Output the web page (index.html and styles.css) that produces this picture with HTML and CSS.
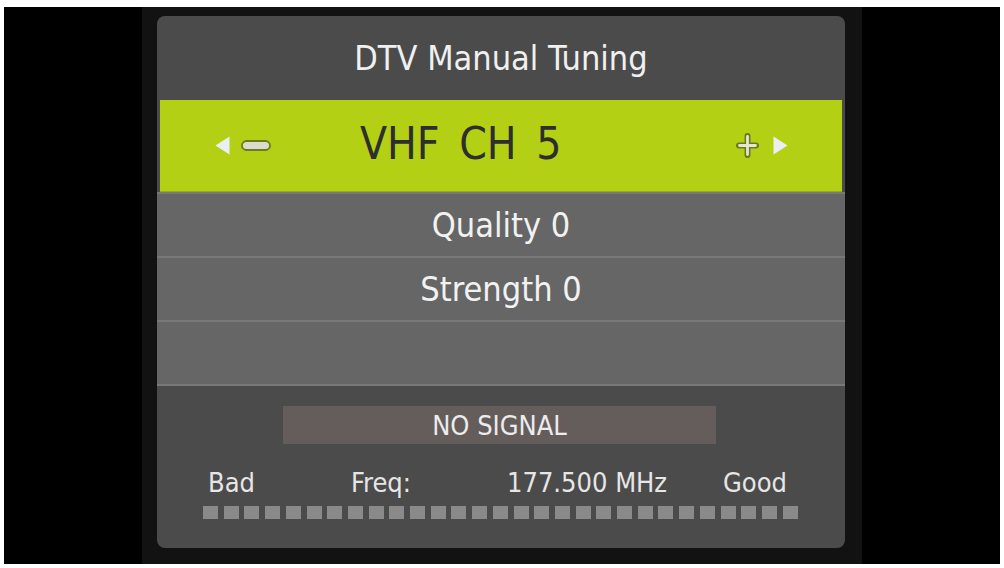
FILE: index.html
```html
<!DOCTYPE html>
<html>
<head>
<meta charset="utf-8">
<link rel="stylesheet" href="styles.css">
</head>
<body>
<div class="screen">
  <div class="frame">
    <div class="panel">
      <div class="title">DTV Manual Tuning</div>
      <div class="tune">
        <div class="ctrl ctrl-left">
          <svg width="15" height="19" viewBox="0 0 15 19"><polygon points="14.5,0.5 14.5,18.5 0.5,9.5" fill="#eceef6"/></svg>
          <svg width="30" height="11" viewBox="0 0 30 11"><rect x="1" y="1" width="28" height="9" rx="4.5" fill="#dcdccc" stroke="#6c7a1e" stroke-width="1.8"/></svg>
        </div>
        <div class="channel">VHF CH 5</div>
        <div class="ctrl ctrl-right">
          <svg width="23" height="25" viewBox="0 0 23 25"><path d="M11.5 3 V22 M3 12.5 H20" stroke="#6c7a1e" stroke-width="6" stroke-linecap="round" fill="none"/><path d="M11.5 3.5 V21.5 M3.5 12.5 H19.5" stroke="#e4e6d8" stroke-width="2.8" stroke-linecap="round" fill="none"/></svg>
          <svg width="15" height="19" viewBox="0 0 15 19"><polygon points="0.5,0.5 14.5,9.5 0.5,18.5" fill="#eceef6"/></svg>
        </div>
      </div>
      <div class="rows">
        <div class="row">Quality 0</div>
        <div class="row">Strength 0</div>
        <div class="row"></div>
      </div>
      <div class="bottom">
        <div class="nosig">NO SIGNAL</div>
        <div class="labels">
          <span class="lab lab-bad">Bad</span>
          <span class="lab lab-freq">Freq:</span>
          <span class="lab lab-val">177.500 MHz</span>
          <span class="lab">Good</span>
        </div>
        <div class="meter">
          <i></i><i></i><i></i><i></i><i></i><i></i><i></i><i></i><i></i><i></i>
          <i></i><i></i><i></i><i></i><i></i><i></i><i></i><i></i><i></i><i></i>
          <i></i><i></i><i></i><i></i><i></i><i></i><i></i><i></i><i></i>
        </div>
      </div>
    </div>
  </div>
</div>
</body>
</html>
```
FILE: styles.css
```css
html, body {
  margin: 0;
  padding: 0;
  background: #ffffff;
}
body {
  width: 1004px;
  height: 568px;
  overflow: hidden;
  font-family: "DejaVu Sans Condensed", "DejaVu Sans", sans-serif;
  font-stretch: condensed;
}
.screen {
  margin: 7px 4px 0 4px;
  height: 557px;
  background: #000;
  display: flex;
  justify-content: center;
}
.frame {
  width: 720px;
  height: 557px;
  box-sizing: border-box;
  background: #121212;
  padding: 9px 17px 16px 15px;
}
.panel {
  width: 688px;
  height: 532px;
  border-radius: 8px;
  background: #4b4b4b;
  overflow: hidden;
  display: flex;
  flex-direction: column;
}
.title {
  height: 84px;
  flex: none;
  display: flex;
  align-items: center;
  justify-content: center;
  color: #f0f0f0;
  font-size: 34px;
}
.tune {
  height: 92px;
  flex: none;
  margin: 0 3px;
  box-sizing: border-box;
  background: #b4d014;
  border-bottom: 1px solid #98ae12;
  display: flex;
  align-items: center;
  padding: 0 54px 0 55px;
}
.ctrl {
  display: flex;
  align-items: center;
}
.ctrl-left { gap: 11px; }
.ctrl-right { gap: 14px; margin-left: auto; }
.ctrl svg { display: block; }
.channel {
  margin-left: 89px;
  white-space: pre;
  word-spacing: 7px;
  font-size: 44px;
  color: #2e2e2e;
  line-height: 1;
  margin-top: -4px;
}
.rows {
  flex: none;
  border-top: 2px solid #787878;
}
.row {
  height: 62px;
  background: #666666;
  border-bottom: 2px solid #787878;
  display: flex;
  align-items: center;
  justify-content: center;
  color: #f2f2f2;
  font-size: 34px;
}
.bottom {
  flex: 1;
  padding-top: 20px;
}
.nosig {
  margin-left: 126px;
  width: 433px;
  height: 38px;
  background: #655d5b;
  color: #ececec;
  font-size: 27px;
  display: flex;
  align-items: center;
  justify-content: center;
}
.labels {
  margin-top: 23px;
  padding-left: 51px;
  display: flex;
  font-size: 27px;
  line-height: 32px;
  color: #e6e6e6;
}
.lab-bad { width: 143px; }
.lab-freq { width: 156px; }
.lab-val { width: 216px; }
.meter {
  margin: 7px 0 0 46px;
  width: 595px;
  height: 13px;
  display: flex;
  justify-content: space-between;
}
.meter i {
  display: block;
  width: 15px;
  height: 13px;
  background: #8a8a8a;
}
```
